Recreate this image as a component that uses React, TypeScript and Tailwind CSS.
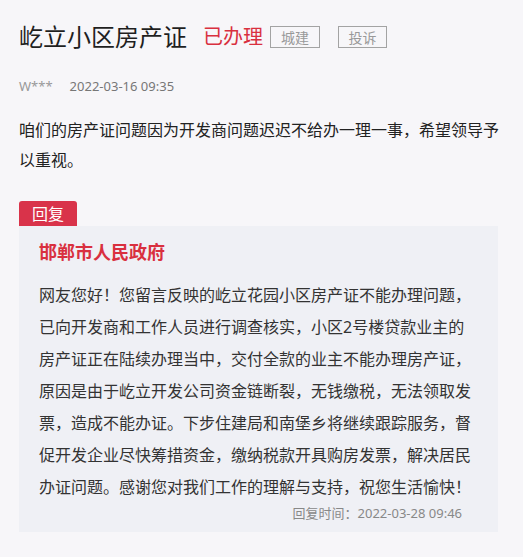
const App: React.FC = () => {
  return (
    <div
      className="min-h-[557px] w-full bg-[#f7f6f9] px-[19px] pt-[21px]"
      style={{ fontFamily: '"Noto Sans", "Noto Sans CJK SC", sans-serif' }}
    >
      <div className="flex items-center">
        <h1 className="text-[24px] leading-[32px] text-[#1f1f1f]">屹立小区房产证</h1>
        <span className="ml-[16px] text-[20px] leading-[32px] text-[#d9303f]">已办理</span>
        <span className="ml-[7px] flex h-[22px] w-[50px] items-center justify-center border border-[#a3a3a3] text-[14px] text-[#999]">
          城建
        </span>
        <span className="ml-[18px] flex h-[22px] w-[49px] items-center justify-center border border-[#a3a3a3] text-[14px] text-[#999]">
          投诉
        </span>
      </div>

      <div className="mt-[23px] flex text-[13px] leading-[20px]">
        <span className="text-[#999]">W***</span>
        <span className="ml-[17px] text-[#777]">2022-03-16 09:35</span>
      </div>

      <p className="mt-[19px] text-[16px] leading-[30px] text-[#222]">
        咱们的房产证问题因为开发商问题迟迟不给办一理一事，希望领导予以重视。
      </p>

      <div className="mt-[26px] flex h-[25px] w-[58px] items-center justify-center rounded-t-[3px] bg-[#d9334a] text-[16px] text-white">
        回复
      </div>
      <div className="mr-[6px] bg-[#eff0f5] px-[20px] pb-[9px] pt-[13px]">
        <h2 className="text-[18px] font-bold leading-[26px] text-[#d9303f]">邯郸市人民政府</h2>
        <p className="mt-[14px] text-[16px] leading-[32px] text-[#333]">
          网友您好！您留言反映的屹立花园小区房产证不能办理问题，已向开发商和工作人员进行调查核实，小区2号楼贷款业主的房产证正在陆续办理当中，交付全款的业主不能办理房产证，原因是由于屹立开发公司资金链断裂，无钱缴税，无法领取发票，造成不能办证。下步住建局和南堡乡将继续跟踪服务，督促开发企业尽快筹措资金，缴纳税款开具购房发票，解决居民办证问题。感谢您对我们工作的理解与支持，祝您生活愉快！
        </p>
        <div className="mr-[16px] text-right text-[13px] leading-[20px] text-[#888]">
          回复时间：2022-03-28 09:46
        </div>
      </div>
    </div>
  );
};

export default App;
